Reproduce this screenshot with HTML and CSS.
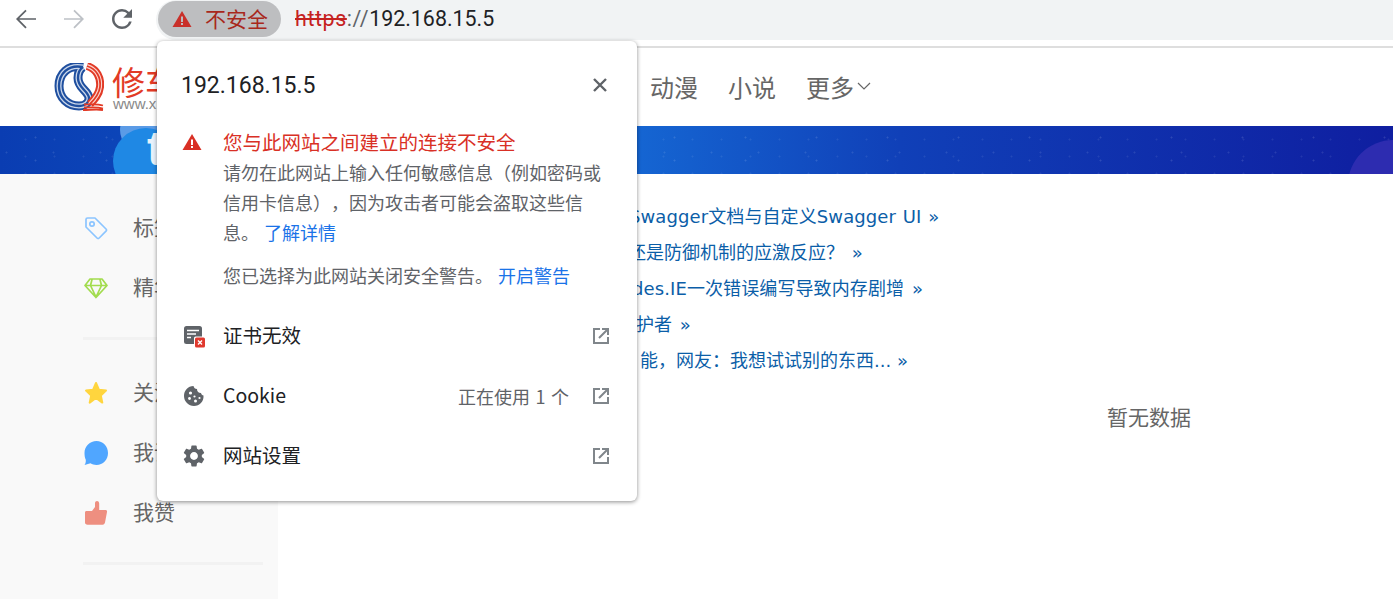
FILE: index.html
```html
<!DOCTYPE html>
<html lang="zh-CN">
<head>
  <meta charset="UTF-8">
  <title>192.168.15.5</title>
  <link rel="stylesheet" href="styles.css">
</head>
<body>
<div class="toolbar">
  <span class="nav-btn">
    <svg width="30" height="30" viewBox="0 0 24 24"><path d="M20 11.400H6.600l5.900-5.900-1-1L4 12l7.500 7.500 1-1-5.900-5.900H20z"/></svg>
  </span>
  <span class="nav-btn nav-off">
    <svg width="30" height="30" viewBox="0 0 24 24"><path d="M4 11.400h13.400l-5.900-5.900 1-1L20 12l-7.500 7.500-1-1 5.900-5.900H4z"/></svg>
  </span>
  <span class="nav-btn">
    <svg width="30" height="30" viewBox="0 0 24 24"><path d="M17.650 6.350A7.958 7.958 0 0 0 12 4c-4.420 0-7.990 3.580-7.990 8s3.570 8 7.990 8c3.730 0 6.840-2.550 7.730-6h-2.080A5.990 5.990 0 0 1 12 18c-3.310 0-6-2.690-6-6s2.690-6 6-6c1.660 0 3.140.69 4.220 1.780L13 11h7V4l-2.350 2.350z"/></svg>
  </span>
  <div class="omnibox">
    <div class="chip">
      <svg class="warn" width="20" height="18" viewBox="0 0 20 18"><path d="M10 1l9.500 16H.5z"/><rect x="9" y="6.500" width="2" height="5.500" fill="#bdbec0"/><rect x="9" y="13" width="2" height="2" fill="#bdbec0"/></svg>
      <span class="chip-text">不安全</span>
    </div>
    <div class="url"><s>https</s><span class="url-sep">://</span>192.168.15.5</div>
  </div>
</div>

<div class="header">
  <div class="logo">
    <svg width="50" height="48" viewBox="0 0 50 48" fill="none">
      <path d="M29 4C14 1 5 11 5 23c0 12 9 20 20 20 8 0 12-6 9-11-3-6-10-8-10-17 0-5 2-9 5-11" stroke="#1f4f9f" stroke-width="9"/>
      <path d="M29 4C14 1 5 11 5 23c0 12 9 20 20 20 8 0 12-6 9-11-3-6-10-8-10-17 0-5 2-9 5-11" stroke="#c9d6ea" stroke-width="5"/>
      <path d="M29 4C14 1 5 11 5 23c0 12 9 20 20 20 8 0 12-6 9-11-3-6-10-8-10-17 0-5 2-9 5-11" stroke="#1f4f9f" stroke-width="2.400"/>
      <path d="M33 3c10 3 14 12 13 21-1 8-6 13-10 17" stroke="#e23a26" stroke-width="8"/>
      <path d="M33 3c10 3 14 12 13 21-1 8-6 13-10 17" stroke="#fbd5cf" stroke-width="4"/>
      <path d="M33 3c10 3 14 12 13 21-1 8-6 13-10 17" stroke="#e23a26" stroke-width="1.800"/>
      <path d="M30 41.500c6 0 13-1 19 1M30 44.500c6 0 13-1 19 1M29 47c7 0 14-1 20 0" stroke="#e23a26" stroke-width="1.800"/>
    </svg>
    <div class="logo-text">
      <div class="logo-name">修车</div>
      <div class="logo-site">www.x</div>
    </div>
  </div>
  <div class="menu">
    <a>动漫</a>
    <a>小说</a>
    <a class="menu-more">更多
      <svg width="14" height="8" viewBox="0 0 14 8" fill="none"><path d="M1 1l6 6 6-6" stroke="#666" stroke-width="1.200"/></svg>
    </a>
  </div>
</div>

<div class="banner">
  <div class="blob-top"></div>
  <div class="blob"></div>
  <div class="blob-letter">t</div>
  <div class="blob-right"></div>
</div>

<div class="content">
  <div class="sidebar">
    <div class="side-group">
      <div class="side-row">
        <svg width="24" height="24" viewBox="0 0 24 24" fill="none" stroke="#8cc5ff" stroke-width="1.700" stroke-linejoin="round"><path d="M2 3.500c0-1 .7-1.500 1.500-1.500h7.500l11 11c.7.7.7 1.500 0 2.200L15.200 22c-.7.7-1.500.7-2.200 0L2 11z"/><circle cx="8" cy="8" r="2.200"/></svg>
        <span>标签</span>
      </div>
      <div class="side-row">
        <svg width="24" height="22" viewBox="0 0 24 22" fill="none" stroke="#a2dc4e" stroke-width="1.700" stroke-linejoin="round"><path d="M6 2h12l5 6.500L12 20.500 1 8.500zM1 8.500h22M8 2.500L6.500 8.500 12 20l5.500-11.500L16 2.500"/></svg>
        <span>精华</span>
      </div>
    </div>
    <div class="side-line"></div>
    <div class="side-group">
      <div class="side-row">
        <svg width="24" height="24" viewBox="0 0 24 24"><path fill="#ffd53e" stroke="#ffd53e" stroke-linejoin="round" stroke-width="2" d="M12 2l3 6.800 7 .8-5.200 4.800 1.500 7.200L12 17l-6.300 4.600 1.500-7.200L2 9.600l7-.8z"/></svg>
        <span>关注</span>
      </div>
      <div class="side-row">
        <svg width="24" height="24" viewBox="0 0 24 24"><path fill="#50a6ff" d="M12.500 0C19 0 24 5.300 24 12s-5 12-11.500 12c-2.300 0-4.300-.6-6-1.700L.5 24c1.300-1.800 1.500-3.700 1.200-5.500C.9 17 .5 14.500.5 12 .5 5.300 6 0 12.500 0z"/></svg>
        <span>我评</span>
      </div>
      <div class="side-row">
        <svg width="24" height="24" viewBox="0 0 24 24"><path fill="#ee8f80" d="M1 11.500c0-1 .7-1.500 1.500-1.500H8l3-4V2c0-1.200 1-2 2-2s2.200.8 2.200 2.500V9h6.300c1.200 0 1.800 1 1.500 2l-2 10.500c-.3 1.200-1 2-2.300 2.200H3.500C2 23.700 1 22.800 1 21.500z"/></svg>
        <span>我赞</span>
      </div>
    </div>
    <div class="side-line"></div>
  </div>
  <div class="news">
    <div class="news-row row-a"><a>Swagger文档与自定义Swagger UI</a> »</div>
    <div class="news-row row-b"><a>还是防御机制的应激反应？</a> »</div>
    <div class="news-row row-c"><a>des.IE一次错误编写导致内存剧增</a> »</div>
    <div class="news-row row-d"><a>护者</a> »</div>
    <div class="news-row row-e"><a>能，网友：我想试试别的东西...</a> »</div>
  </div>
  <div class="empty">暂无数据</div>
</div>

<div class="popup">
  <div class="popup-head">
    <div class="popup-title">192.168.15.5</div>
    <svg class="popup-close" width="16" height="16" viewBox="0 0 16 16"><path d="M2 2l12 12M14 2L2 14" stroke="#5f6368" stroke-width="2.400"/></svg>
  </div>
  <div class="popup-warn">
    <svg class="warn-icon" width="20" height="18" viewBox="0 0 20 18"><path d="M10 1l9.500 16H.5z" fill="#d93025"/><rect x="9" y="6.500" width="2" height="5.500" fill="#fff"/><rect x="9" y="13" width="2" height="2" fill="#fff"/></svg>
    <div class="warn-text">
      <div class="warn-title">您与此网站之间建立的连接不安全</div>
      <div>请勿在此网站上输入任何敏感信息（例如密码或信用卡信息），因为攻击者可能会盗取这些信息。 <a>了解详情</a></div>
      <div class="warn-off">您已选择为此网站关闭安全警告。 <a>开启警告</a></div>
    </div>
  </div>
  <div class="popup-row">
    <svg class="row-icon" width="24" height="24" viewBox="0 0 24 24">
      <rect x="2" y="2" width="18" height="18" rx="2.500" fill="#5f6368"/>
      <path d="M5 6.500h12M5 10h9M5 13.500h4" stroke="#fff" stroke-width="1.500"/>
      <rect x="12" y="12.500" width="11" height="11" rx="1.500" fill="#fff"/>
      <rect x="13" y="13.500" width="10" height="10" rx="1.500" fill="#e0392e"/>
      <path d="M16 16.500l4 4M20 16.500l-4 4" stroke="#fff" stroke-width="1.400"/>
    </svg>
    <span class="row-name">证书无效</span>
    <svg class="row-open" width="20" height="20" viewBox="0 0 20 20" fill="none" stroke="#80868b" stroke-width="2"><path d="M9 3H3v14h14v-6M11 3h6v6M17 3L8 12"/></svg>
  </div>
  <div class="popup-row">
    <svg class="row-icon" width="24" height="24" viewBox="0 0 24 24">
      <path fill="#5f6368" d="M11.500 2c.5 2 1.500 3 3.500 3 0 2.500 1.500 4 4 4 .3 1.500 1.300 2.200 2.500 2.500.5 6-4 10.500-9.500 10.500S2 17.500 2 12 6 2 11.500 2z"/>
      <g fill="#fff"><circle cx="8.500" cy="9" r="1.600"/><circle cx="7.500" cy="14.500" r="1.400"/><circle cx="12.500" cy="12.500" r="1.100"/><circle cx="13.500" cy="17" r="1.500"/><circle cx="17.500" cy="14" r="1.100"/></g>
    </svg>
    <span class="row-name">Cookie</span>
    <span class="row-count">正在使用 1 个</span>
    <svg class="row-open" width="20" height="20" viewBox="0 0 20 20" fill="none" stroke="#80868b" stroke-width="2"><path d="M9 3H3v14h14v-6M11 3h6v6M17 3L8 12"/></svg>
  </div>
  <div class="popup-row">
    <svg class="row-icon" width="24" height="24" viewBox="1.200 1 21.600 22">
      <path fill="#5f6368" d="M19.140 12.940c.04-.3.060-.61.060-.94 0-.32-.02-.64-.07-.94l2.030-1.580a.49.49 0 0 0 .12-.61l-1.920-3.320a.488.488 0 0 0-.59-.22l-2.390.96c-.5-.38-1.030-.7-1.620-.94l-.36-2.540a.484.484 0 0 0-.48-.41h-3.840c-.24 0-.43.17-.47.41l-.36 2.540c-.59.24-1.130.57-1.620.94l-2.390-.96c-.22-.08-.47 0-.59.22L2.740 8.870c-.12.21-.08.47.12.61l2.030 1.580c-.05.3-.09.63-.09.94s.02.64.07.94l-2.030 1.580a.49.49 0 0 0-.12.61l1.920 3.320c.12.22.37.29.59.22l2.390-.96c.5.38 1.030.7 1.620.94l.36 2.540c.05.24.24.41.48.41h3.840c.24 0 .44-.17.47-.41l.36-2.540c.59-.24 1.130-.56 1.620-.94l2.390.96c.22.08.47 0 .59-.22l1.920-3.320c.12-.22.07-.47-.12-.61l-2.010-1.580zM12 15.600c-1.980 0-3.600-1.620-3.600-3.600s1.620-3.600 3.600-3.600 3.600 1.620 3.600 3.600-1.620 3.600-3.600 3.600z"/>
    </svg>
    <span class="row-name">网站设置</span>
    <svg class="row-open" width="20" height="20" viewBox="0 0 20 20" fill="none" stroke="#80868b" stroke-width="2"><path d="M9 3H3v14h14v-6M11 3h6v6M17 3L8 12"/></svg>
  </div>
</div>
</body>
</html>
```

FILE: styles.css
```css
* {
  box-sizing: border-box;
}
body {
  margin: 0;
  height: 100vh;
  overflow: hidden;
  display: flex;
  flex-direction: column;
  background: #fff;
  font-family: "Noto Sans CJK SC", sans-serif;
  color: #666;
  text-spacing-trim: space-all;
}

/* browser toolbar */
.toolbar {
  display: flex;
  align-items: flex-start;
  height: 48px;
  padding-left: 2px;
  border-bottom: 2px solid #dedede;
  flex-shrink: 0;
}
.nav-btn {
  width: 48px;
  height: 38px;
  display: flex;
  align-items: center;
  justify-content: center;
  fill: #5f6368;
}
.nav-off {
  fill: #bdc1c6;
}
.omnibox {
  flex: 1;
  height: 40px;
  margin-left: 10px;
  padding: 1px 0 0 2px;
  display: flex;
  align-items: flex-start;
  background: #f1f3f4;
  border-radius: 20px 0 0 20px;
}
.chip {
  width: 123px;
  height: 36px;
  padding-left: 14px;
  display: flex;
  align-items: center;
  gap: 14px;
  background: #bdbec0;
  border-radius: 18px;
  color: #a8281c;
  font-size: 21px;
}
.chip-text {
  margin: -2px 0 0 -1px;
}
.warn {
  fill: #c9302a;
}
.url {
  margin-left: 14px;
  height: 36px;
  line-height: 36px;
  font-family: Roboto, sans-serif;
  font-size: 21.400px;
  color: #202124;
}
.url s {
  color: #c5221f;
  letter-spacing: .6px;
}
.url-sep {
  color: #5f6368;
  letter-spacing: .6px;
}

/* site header */
.header {
  height: 78px;
  flex-shrink: 0;
  display: flex;
  align-items: center;
  padding-left: 54px;
}
.logo {
  display: flex;
  align-items: center;
  gap: 8px;
  width: 596px;
}
.logo-name {
  font-size: 33px;
  line-height: 34px;
  color: #e23a26;
}
.logo-site {
  margin-left: 1px;
  font-family: "Liberation Sans", sans-serif;
  font-size: 15px;
  line-height: 12px;
  color: #888;
}
.menu {
  display: flex;
  gap: 30px;
  margin-top: -2px;
  font-size: 24px;
  color: #666;
}
.menu-more {
  display: flex;
  align-items: center;
  gap: 3px;
}

.banner {
  position: relative;
  height: 48px;
  flex-shrink: 0;
  overflow: hidden;
  background:
    radial-gradient(circle, rgba(255,255,255,.12) 0 .8px, transparent 1.200px) 0 0 / 71px 23px,
    radial-gradient(circle, rgba(255,255,255,.1) 0 .8px, transparent 1.200px) 30px 11px / 47px 31px,
    radial-gradient(circle, rgba(255,255,255,.08) 0 .8px, transparent 1.200px) 11px 5px / 29px 17px,
    linear-gradient(90deg, #0a3db2 0, #1565d2 640px, #1040b8 900px, #0f1ea0 100%);
}
.blob-top {
  position: absolute;
  left: 120px;
  top: -18px;
  width: 44px;
  height: 44px;
  border-radius: 50%;
  background: #5b9be6;
}
.blob {
  position: absolute;
  left: 113px;
  top: 2px;
  width: 66px;
  height: 66px;
  border-radius: 50%;
  background: #1f88e4;
}
.blob-letter {
  position: absolute;
  left: 147px;
  top: -2px;
  font-family: "Liberation Sans", sans-serif;
  font-size: 48px;
  font-weight: bold;
  line-height: 50px;
  color: #e8f2fc;
}
.blob-right {
  position: absolute;
  left: 1348px;
  top: 14px;
  width: 90px;
  height: 90px;
  border-radius: 50%;
  background: #2d2cb0;
}

/* page body */
.content {
  flex: 1;
  display: flex;
}
.sidebar {
  width: 278px;
  padding: 24px 15px 0 83px;
  background: #f9f9f9;
}
.side-row {
  height: 60px;
  display: flex;
  align-items: center;
  gap: 25px;
  padding-left: 1px;
  font-size: 21px;
  color: #666;
}
.side-row span {
  margin-top: -4px;
}
.side-row svg {
  flex-shrink: 0;
  margin-top: -1px;
}
.side-line {
  height: 3px;
  margin: 19px 0 23px;
  background: #f2f2f2;
}
.news {
  width: 627px;
  padding: 25px 0 0 354px;
  font-family: "DejaVu Sans", "Noto Sans CJK SC", sans-serif;
  font-size: 18px;
  word-spacing: 2px;
  color: #0b5ea8;
}
.news-row {
  height: 36px;
  line-height: 36px;
  white-space: nowrap;
}
.row-a {
  margin-left: -3px;
  letter-spacing: .1px;
  word-spacing: 1px;
}
.row-b {
  margin-left: -4px;
}
.row-c {
  letter-spacing: .1px;
}
.row-d {
  margin-left: 4px;
}
.row-e {
  margin-left: 8px;
  word-spacing: 0;
}
.empty {
  flex: 1;
  padding-top: 227px;
  line-height: 30px;
  text-align: center;
  font-size: 21px;
  color: #666;
}

/* site info popup */
.popup {
  position: absolute;
  left: 157px;
  top: 41px;
  width: 480px;
  height: 460px;
  background: #fff;
  border-radius: 6px;
  box-shadow: 0 1px 4px rgba(0, 0, 0, .45);
  color: #5f6368;
  font-size: 18px;
}
.popup-head {
  height: 87px;
  padding: 0 29px 0 24px;
  display: flex;
  align-items: center;
  justify-content: space-between;
}
.popup-title {
  padding-top: 2px;
  font-family: Roboto, sans-serif;
  font-size: 23px;
  color: #202124;
}
.popup-warn {
  display: flex;
  padding-left: 25px;
}
.warn-icon {
  margin-top: 5px;
  flex-shrink: 0;
}
.warn-text {
  width: 382px;
  margin: -1px 0 0 21px;
  line-height: 30px;
  word-spacing: 1px;
}
.warn-title {
  font-size: 19.500px;
  color: #d93025;
}
.warn-text a {
  color: #1a73e8;
}
.warn-off {
  margin-top: 13px;
}
.popup-row {
  height: 60px;
  display: flex;
  align-items: center;
  padding: 0 26px 0 25px;
}
.popup-warn + .popup-row {
  margin-top: 16px;
}
.row-icon {
  flex-shrink: 0;
}
.row-name {
  margin: -4px 0 0 17px;
  flex: 1;
  font-size: 19.500px;
  color: #202124;
}
.row-count {
  margin: 0 22px 0 0;
  word-spacing: 1.500px;
}
.row-open {
  flex-shrink: 0;
}
```
